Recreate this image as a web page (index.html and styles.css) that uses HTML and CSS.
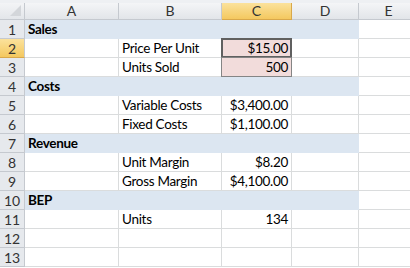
FILE: index.html
```html
<!DOCTYPE html>
<html lang="en">
<head>
    <meta charset="UTF-8">
    <title>Break Even</title>
    <link rel="stylesheet" href="styles.css">
</head>
<body>
    <div class="sheet">
        <div class="corner"><span class="tri"></span></div>
        <div class="col-head">A</div>
        <div class="col-head">B</div>
        <div class="col-head active">C</div>
        <div class="col-head">D</div>
        <div class="col-head">E</div>

        <div class="row-head">1</div>
        <div class="cell section">Sales</div>
        <div class="cell section"></div>
        <div class="cell section"></div>
        <div class="cell section"></div>
        <div class="cell"></div>

        <div class="row-head active">2</div>
        <div class="cell"></div>
        <div class="cell">Price Per Unit</div>
        <div class="cell num input selected">$15.00</div>
        <div class="cell"></div>
        <div class="cell"></div>

        <div class="row-head">3</div>
        <div class="cell"></div>
        <div class="cell">Units Sold</div>
        <div class="cell num input">500</div>
        <div class="cell"></div>
        <div class="cell"></div>

        <div class="row-head">4</div>
        <div class="cell section">Costs</div>
        <div class="cell section"></div>
        <div class="cell section"></div>
        <div class="cell section"></div>
        <div class="cell"></div>

        <div class="row-head">5</div>
        <div class="cell"></div>
        <div class="cell">Variable Costs</div>
        <div class="cell num">$3,400.00</div>
        <div class="cell"></div>
        <div class="cell"></div>

        <div class="row-head">6</div>
        <div class="cell"></div>
        <div class="cell">Fixed Costs</div>
        <div class="cell num">$1,100.00</div>
        <div class="cell"></div>
        <div class="cell"></div>

        <div class="row-head">7</div>
        <div class="cell section">Revenue</div>
        <div class="cell section"></div>
        <div class="cell section"></div>
        <div class="cell section"></div>
        <div class="cell"></div>

        <div class="row-head">8</div>
        <div class="cell"></div>
        <div class="cell">Unit Margin</div>
        <div class="cell num">$8.20</div>
        <div class="cell"></div>
        <div class="cell"></div>

        <div class="row-head">9</div>
        <div class="cell"></div>
        <div class="cell">Gross Margin</div>
        <div class="cell num">$4,100.00</div>
        <div class="cell"></div>
        <div class="cell"></div>

        <div class="row-head">10</div>
        <div class="cell section">BEP</div>
        <div class="cell section"></div>
        <div class="cell section"></div>
        <div class="cell section"></div>
        <div class="cell"></div>

        <div class="row-head">11</div>
        <div class="cell"></div>
        <div class="cell">Units</div>
        <div class="cell num">134</div>
        <div class="cell"></div>
        <div class="cell"></div>

        <div class="row-head">12</div>
        <div class="cell"></div>
        <div class="cell"></div>
        <div class="cell"></div>
        <div class="cell"></div>
        <div class="cell"></div>

        <div class="row-head">13</div>
        <div class="cell"></div>
        <div class="cell"></div>
        <div class="cell"></div>
        <div class="cell"></div>
        <div class="cell"></div>
    </div>
</body>
</html>
```
FILE: styles.css
```css
body {
    margin: 0;
    padding: 0;
    background-color: #fff;
    font-family: Lato, "Liberation Sans", sans-serif;
    font-size: 13.5px;
    letter-spacing: -0.3px;
    color: #000;
    overflow: hidden;
}
.sheet {
    display: grid;
    grid-template-columns: 25px 94px 103px 70px 67px 60px;
    grid-template-rows: 17px repeat(13, 19px);
    border-top: 3px solid #eef0f3;
    width: 419px;
}
.corner {
    position: relative;
    background: linear-gradient(#f3f4f6, #e3e6ea);
    border-right: 1px solid #c5c9cf;
    border-bottom: 1px solid #c5c9cf;
}
.tri {
    position: absolute;
    right: 3px;
    bottom: 3px;
    width: 0;
    height: 0;
    border-left: 11px solid transparent;
    border-bottom: 11px solid #d3d6da;
}
.col-head {
    background: linear-gradient(#f4f5f7, #e2e5e9);
    border-right: 1px solid #c5c9cf;
    border-bottom: 1px solid #c5c9cf;
    text-align: center;
    color: #333;
    font-size: 14px;
    letter-spacing: 0;
    line-height: 16px;
}
.row-head {
    background-color: #e6e9ed;
    border-right: 1px solid #c5c9cf;
    border-bottom: 1px solid #c5c9cf;
    text-align: center;
    color: #333;
    font-size: 14px;
    letter-spacing: 0;
    line-height: 19px;
}
.col-head.active {
    background: linear-gradient(#fbe29c, #f4c85f);
    border-right-color: #d9a84a;
    border-bottom-color: #d9a84a;
}
.row-head.active {
    background: linear-gradient(#fbe29c, #f4c85f);
    border-bottom-color: #d9a84a;
}
.cell {
    box-sizing: border-box;
    border-right: 1px solid #dadcdd;
    border-bottom: 1px solid #dadcdd;
    padding: 0 3px;
    line-height: 19px;
    white-space: nowrap;
}
.section {
    background-color: #dce6f1;
    border-color: #dce6f1;
    font-weight: bold;
}
.num {
    text-align: right;
}
.input {
    background-color: #f2dcdb;
    border: 1px solid #858585;
    margin: -1px 0 0 -1px;
    line-height: 18px;
}
.selected {
    border: 2px solid #606060;
    line-height: 16px;
    padding: 0 2px;
}
```
